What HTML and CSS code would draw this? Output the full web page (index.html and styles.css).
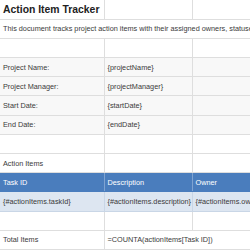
FILE: index.html
```html
<!DOCTYPE html>
<html>
<head>
<meta charset="utf-8">
<link rel="stylesheet" href="styles.css">
</head>
<body>
<table class="sheet">
  <colgroup>
    <col class="col-a">
    <col class="col-b">
    <col class="col-c">
  </colgroup>
  <tr class="row title-row">
    <td class="title">Action Item Tracker</td>
    <td></td>
    <td></td>
  </tr>
  <tr class="row">
    <td colspan="3" class="nowrap">This document tracks project action items with their assigned owners, statuses, and due dates.</td>
  </tr>
  <tr class="row"><td></td><td></td><td></td></tr>
  <tr class="row meta"><td>Project Name:</td><td>{projectName}</td><td></td></tr>
  <tr class="row meta"><td>Project Manager:</td><td>{projectManager}</td><td></td></tr>
  <tr class="row meta"><td>Start Date:</td><td>{startDate}</td><td></td></tr>
  <tr class="row meta"><td>End Date:</td><td>{endDate}</td><td></td></tr>
  <tr class="row"><td></td><td></td><td></td></tr>
  <tr class="row"><td>Action Items</td><td></td><td></td></tr>
  <tr class="row head"><td>Task ID</td><td>Description</td><td>Owner</td></tr>
  <tr class="row data"><td>{#actionItems.taskId}</td><td>{#actionItems.description}</td><td>{#actionItems.owner}</td></tr>
  <tr class="row"><td></td><td></td><td></td></tr>
  <tr class="row"><td>Total Items</td><td colspan="2">=COUNTA(actionItems[Task ID])</td></tr>
</table>
</body>
</html>
```
FILE: styles.css
```css
html, body {
  margin: 0;
  padding: 0;
  background: #ffffff;
  overflow: hidden;
}
.sheet {
  border-collapse: collapse;
  table-layout: fixed;
  width: 330px;
  font-family: "Liberation Sans", Arial, sans-serif;
  font-size: 7.3px;
  color: #3a3a3a;
}
.col-a { width: 104px; }
.col-b { width: 88px; }
.col-c { width: 138px; }
.sheet td {
  height: 19.2px;
  padding: 0 3px;
  border: 1px solid #dedede;
  white-space: nowrap;
  overflow: visible;
  vertical-align: middle;
  box-sizing: border-box;
}
.sheet tr:first-child td { border-top: none; }
.sheet td:first-child { border-left: none; }
.title {
  font-size: 10.4px;
  font-weight: bold;
  color: #222222;
  padding-left: 2px;
}
.meta td { background: #f8f8f8; }
.head td {
  background: #4a7dbd;
  color: #ffffff;
  border-color: #7fa3d1;
  border-top-color: #4a7dbd;
  border-bottom-color: #4a7dbd;
}
.data td {
  background: #dde6f1;
  border-color: #c9d6e6;
}
```
